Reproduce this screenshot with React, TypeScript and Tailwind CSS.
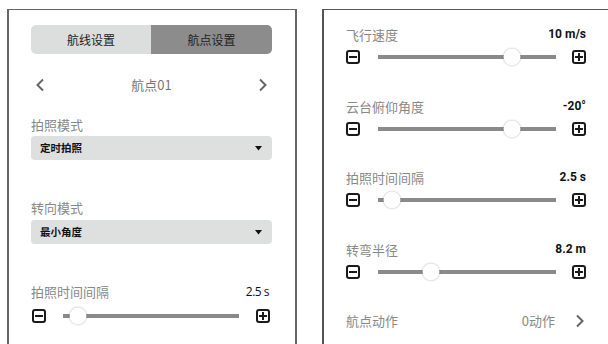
import React from "react";

const FONT = { fontFamily: '"Noto Sans CJK SC", "Noto Sans", sans-serif' };

function MinusBox() {
  return (
    <div className="w-[14px] h-[14px] shrink-0 rounded-[3px] border-2 border-[#1a1a1a] flex items-center justify-center">
      <div className="w-[8px] h-[2px] bg-[#1a1a1a]" />
    </div>
  );
}

function PlusBox() {
  return (
    <div className="relative w-[14px] h-[14px] shrink-0 rounded-[3px] border-2 border-[#1a1a1a] flex items-center justify-center">
      <div className="w-[8px] h-[2px] bg-[#1a1a1a]" />
      <div className="absolute w-[2px] h-[8px] bg-[#1a1a1a]" />
    </div>
  );
}

function Slider({ pct, gapL, gapR }: { pct: number; gapL: string; gapR: string }) {
  return (
    <div className="flex items-center h-[16px]">
      <MinusBox />
      <div className={`relative flex-1 h-[4px] bg-[#8a8a8a] ${gapL} ${gapR}`}>
        <div
          className="absolute top-1/2 w-[17px] h-[17px] -translate-x-1/2 -translate-y-1/2 rounded-full bg-white shadow-[0_0_2px_rgba(0,0,0,0.35)]"
          style={{ left: `${pct}%` }}
        />
      </div>
      <PlusBox />
    </div>
  );
}

function Chevron({ dir }: { dir: "l" | "r" }) {
  return (
    <svg width="10" height="14" viewBox="0 0 10 14">
      <path
        d={dir === "l" ? "M8 1.5 L2.5 7 L8 12.5" : "M2 1.5 L7.5 7 L2 12.5"}
        fill="none"
        stroke="#666"
        strokeWidth="2"
      />
    </svg>
  );
}

function Select({ text }: { text: string }) {
  return (
    <div className="h-[24px] rounded-[4px] bg-[#dedfdf] flex items-center justify-between pl-[9px] pr-[10px]">
      <span className="text-[10.5px] font-bold text-[#111] leading-none">{text}</span>
      <svg width="7" height="5" viewBox="0 0 7 5">
        <path d="M0 0 H7 L3.5 4.5 Z" fill="#111" />
      </svg>
    </div>
  );
}

function RightRow({ label, value, pct }: { label: string; value: string; pct: number }) {
  return (
    <div className="flex flex-col">
      <div className="h-[18px] flex items-center justify-between">
        <span className="text-[13px] text-[#888] leading-none">{label}</span>
        <span className="text-[12px] font-bold text-[#111] leading-none" style={{ fontFamily: "Roboto, sans-serif" }}>
          {value}
        </span>
      </div>
      <div className="mt-[6px]">
        <Slider pct={pct} gapL="ml-[18px]" gapR="mr-[16px]" />
      </div>
    </div>
  );
}

export default function App() {
  return (
    <div className="w-[608px] h-[344px] bg-white overflow-hidden flex items-start" style={FONT}>
      {/* Left panel */}
      <div className="ml-[7px] mt-[9px] w-[290px] h-[400px] shrink-0 border-2 border-t-[1.5px] border-[#666] pl-[22px] pr-[23px] pt-[15px] flex flex-col">
        <div className="h-[29px] flex rounded-[5px] overflow-hidden">
          <div className="w-[120px] bg-[#dcdddd] flex items-center justify-center text-[12px] text-[#222]">航线设置</div>
          <div className="flex-1 bg-[#8c8c8c] flex items-center justify-center text-[12px] text-[#222]">航点设置</div>
        </div>
        <div className="mt-[18px] h-[26px] flex items-center justify-between pl-[4px] pr-[4px]">
          <Chevron dir="l" />
          <span className="text-[13px] text-[#777]">航点01</span>
          <Chevron dir="r" />
        </div>
        <div className="mt-[18px] h-[18px] flex items-center text-[13px] text-[#888]">拍照模式</div>
        <div className="mt-[2px]">
          <Select text="定时拍照" />
        </div>
        <div className="mt-[39px] h-[18px] flex items-center text-[13px] text-[#888]">转向模式</div>
        <div className="mt-[3px]">
          <Select text="最小角度" />
        </div>
        <div className="mt-[39px] h-[18px] flex items-center justify-between">
          <span className="text-[13px] text-[#888]">拍照时间间隔</span>
          <span className="text-[12px] text-[#111] mr-[3px]" style={{ fontFamily: '"Open Sans", sans-serif', letterSpacing: "-0.5px" }}>
            2.5 s
          </span>
        </div>
        <div className="mt-[7px] pl-[1px] pr-[2px]">
          <Slider pct={8.5} gapL="ml-[17px]" gapR="mr-[17px]" />
        </div>
      </div>

      {/* Right panel */}
      <div className="ml-[25px] mt-[9px] w-[300px] h-[400px] shrink-0 border-l-2 border-t-[1.5px] border-[#555] pl-[22px] pt-[15px]">
        <div className="w-[240px] flex flex-col">
          <RightRow label="飞行速度" value="10 m/s" pct={75} />
          <div className="mt-[32px]">
            <RightRow label="云台俯仰角度" value="-20°" pct={75} />
          </div>
          <div className="mt-[31px]">
            <RightRow label="拍照时间间隔" value="2.5 s" pct={8} />
          </div>
          <div className="mt-[32px]">
            <RightRow label="转弯半径" value="8.2 m" pct={30} />
          </div>
          <div className="mt-[32px] h-[18px] flex items-center justify-between">
            <span className="text-[13px] text-[#888]">航点动作</span>
            <div className="flex items-center">
              <span className="text-[13px] text-[#888]">0动作</span>
              <div className="ml-[20px] mr-[1px] flex items-center">
                <Chevron dir="r" />
              </div>
            </div>
          </div>
        </div>
      </div>
    </div>
  );
}
